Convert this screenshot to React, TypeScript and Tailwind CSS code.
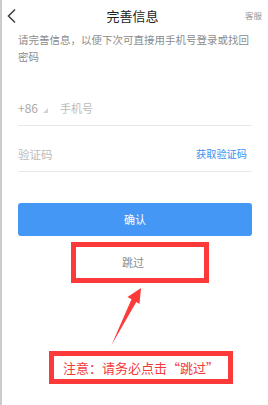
export default function App() {
  return (
    <div
      className="w-[268px] h-[405px] bg-white border-l-2 border-[#cccccc] flex flex-col"
      style={{ fontFamily: '"Noto Sans CJK SC", "Noto Sans", sans-serif' }}
    >
      {/* header */}
      <div className="flex h-[31px] items-center">
        <div className="w-[38px] flex items-center">
          <svg width="38" height="31" viewBox="2 0 38 31">
            <path d="M15 9.5 L8.5 16 L15 22.5" fill="none" stroke="#444" strokeWidth="1.6" />
          </svg>
        </div>
        <div className="flex-1 text-center text-[13px] text-[#222] leading-none">完善信息</div>
        <div className="w-[43px] flex justify-end pr-[6px] text-[8.5px] text-[#999] leading-none">客服</div>
      </div>

      <div className="px-[16px] flex flex-col">
        <p className="text-[10.5px] leading-[17px] text-[#8c8c8c]">
          请完善信息，以便下次可直接用手机号登录或找回密码
        </p>

        {/* phone row */}
        <div className="mt-[35px] pb-[9px] flex items-center h-[16px] box-content">
          <span className="text-[12px] text-[#aaa] leading-[16px] w-[24px]">+86</span>
          <svg width="5" height="5" viewBox="0 0 5 5" className="ml-[1px] mt-[4px]">
            <polygon points="5,0 5,5 0,5" fill="#d4d4d4" />
          </svg>
          <span className="ml-[12px] text-[11px] text-[#bbb] leading-[16px]">手机号</span>
        </div>
        <div className="h-px bg-[#e8e8e8]" />

        {/* code row */}
        <div className="pt-[20px] pb-[9px] flex items-center justify-between h-[16px] box-content">
          <span className="text-[11.5px] text-[#bbb] leading-[16px]">验证码</span>
          <span className="text-[10.2px] text-[#3f8ff0] leading-[16px] mr-[5px]">获取验证码</span>
        </div>
        <div className="h-px bg-[#e8e8e8]" />

        {/* confirm */}
        <button className="mt-[31px] h-[33px] rounded-[3px] bg-[#4597f6] text-white text-[11px]">确认</button>

        {/* skip with annotation box */}
        <div className="mt-[6px] ml-[53px] w-[138px] h-[41px] border-[5px] border-[#fd3a3a] flex items-center pl-[46px]">
          <span className="text-[11px] text-[#8a8a8a] leading-none">跳过</span>
        </div>

        {/* arrow */}
        <svg width="234" height="68" viewBox="18 283 234 68" className="block">
          <polygon
            points="141,288 127.5,297 131.5,299.2 111.5,345 136.3,302 139.5,304"
            fill="#fd3a3a"
          />
        </svg>

        {/* note */}
        <div className="ml-[31px] w-[184px] h-[33px] border-[5px] border-[#fd3a3a] flex items-center justify-center">
          <span className="text-[13px] text-[#f23a3a] leading-none whitespace-nowrap">注意：请务必点击“跳过”</span>
        </div>
      </div>
    </div>
  );
}
